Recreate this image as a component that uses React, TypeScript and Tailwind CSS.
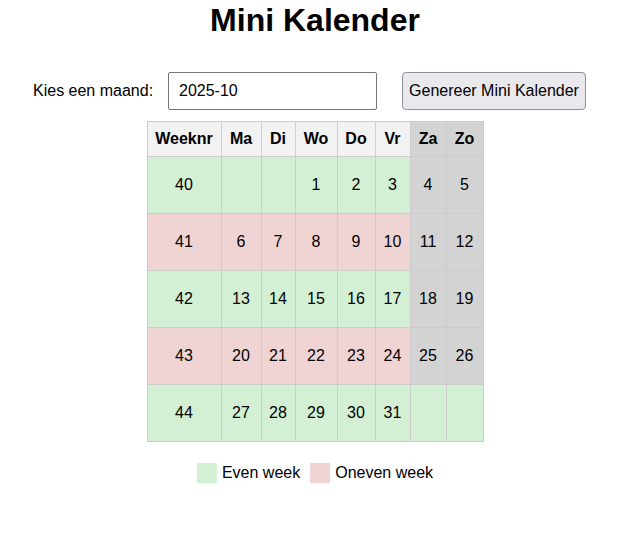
import { useState } from "react";

const DAYS = ["Ma", "Di", "Wo", "Do", "Vr", "Za", "Zo"];
const COL_W = ["w-[40px]", "w-[34px]", "w-[42px]", "w-[38px]", "w-[35px]", "w-[36px]", "w-[37px]"];

type Week = { nr: number; days: (number | null)[] };

function buildWeeks(year: number, month: number): Week[] {
  const first = new Date(year, month - 1, 1);
  const daysInMonth = new Date(year, month, 0).getDate();
  const offset = (first.getDay() + 6) % 7;
  const cells: (number | null)[] = [];
  for (let i = 0; i < offset; i++) cells.push(null);
  for (let d = 1; d <= daysInMonth; d++) cells.push(d);
  while (cells.length % 7 !== 0) cells.push(null);

  const weeks: Week[] = [];
  for (let i = 0; i < cells.length; i += 7) {
    const day = cells.slice(i, i + 7).find((c) => c !== null) as number;
    weeks.push({ nr: isoWeek(new Date(year, month - 1, day)), days: cells.slice(i, i + 7) });
  }
  return weeks;
}

function isoWeek(date: Date): number {
  const d = new Date(Date.UTC(date.getFullYear(), date.getMonth(), date.getDate()));
  const dayNum = d.getUTCDay() || 7;
  d.setUTCDate(d.getUTCDate() + 4 - dayNum);
  const yearStart = new Date(Date.UTC(d.getUTCFullYear(), 0, 1));
  return Math.ceil(((d.getTime() - yearStart.getTime()) / 86400000 + 1) / 7);
}

export default function App() {
  const [value, setValue] = useState("2025-10");
  const [shown, setShown] = useState("2025-10");
  const [y, m] = shown.split("-").map(Number);
  const weeks = buildWeeks(y, m);

  return (
    <div className="w-[630px] font-['Liberation_Sans',Arial,sans-serif] text-black">
      <h1 className="mt-[2px] text-center text-[32px] font-bold leading-[37px]">Mini Kalender</h1>

      <div className="mt-[33px] flex items-center pl-[33px] text-[16px]">
        <label htmlFor="maand" className="w-[135px] shrink-0 whitespace-nowrap">
          Kies een maand:
        </label>
        <input
          id="maand"
          type="text"
          value={value}
          onChange={(e) => setValue(e.target.value)}
          className="h-[38px] w-[209px] shrink-0 rounded-[2px] border border-[#767676] px-[10px] text-[16px] outline-none"
        />
        <button
          type="button"
          onClick={() => setShown(value)}
          className="ml-[25px] h-[38px] w-[184px] shrink-0 whitespace-nowrap rounded-[4px] border border-[#8f8f9d] bg-[#e9e9ed] text-[16px]"
        >
          Genereer Mini Kalender
        </button>
      </div>

      <table className="mx-auto mt-[11px] border-collapse text-center text-[16px]">
        <thead>
          <tr className="h-[35px]">
            <th className="w-[74px] border border-[#cccccc] bg-[#f2f2f2] p-0 font-bold">Weeknr</th>
            {DAYS.map((d, i) => (
              <th
                key={d}
                className={`${COL_W[i]} border border-[#cccccc] p-0 font-bold ${i >= 5 ? "bg-[#d3d3d3]" : "bg-[#f2f2f2]"}`}
              >
                {d}
              </th>
            ))}
          </tr>
        </thead>
        <tbody>
          {weeks.map((w) => {
            const rowBg = w.nr % 2 === 0 ? "bg-[#d4f0d4]" : "bg-[#f0d4d4]";
            return (
              <tr key={w.nr} className="h-[57px]">
                <td className={`border border-[#cccccc] p-0 ${rowBg}`}>{w.nr}</td>
                {w.days.map((d, i) => (
                  <td
                    key={i}
                    className={`border border-[#cccccc] p-0 ${i >= 5 && d !== null ? "bg-[#d3d3d3]" : rowBg}`}
                  >
                    {d ?? ""}
                  </td>
                ))}
              </tr>
            );
          })}
        </tbody>
      </table>

      <div className="mt-[19px] flex items-center justify-center text-[16px]">
        <span className="mr-[5px] h-[20px] w-[20px] bg-[#d4f0d4]" />
        <span className="mr-[10px]">Even week</span>
        <span className="mr-[5px] h-[20px] w-[20px] bg-[#f0d4d4]" />
        <span>Oneven week</span>
      </div>
    </div>
  );
}
